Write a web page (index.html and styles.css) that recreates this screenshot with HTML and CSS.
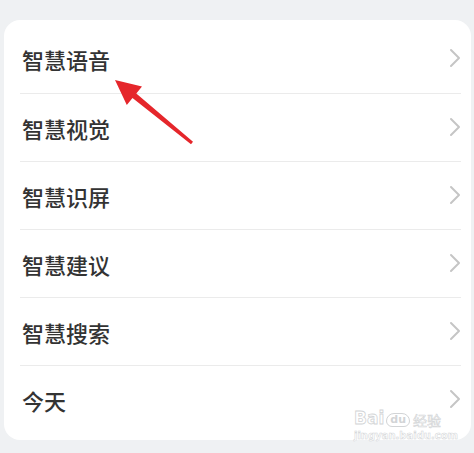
FILE: index.html
```html
<!DOCTYPE html>
<html lang="zh">
<head>
<meta charset="utf-8">
<link rel="stylesheet" href="styles.css">
</head>
<body>
<div class="card">
  <div class="row"><span class="label">智慧语音</span><svg class="chev" viewBox="0 0 12 20"><path d="M2 2 L10 10 L2 18" /></svg></div>
  <div class="row"><span class="label">智慧视觉</span><svg class="chev" viewBox="0 0 12 20"><path d="M2 2 L10 10 L2 18" /></svg></div>
  <div class="row"><span class="label">智慧识屏</span><svg class="chev" viewBox="0 0 12 20"><path d="M2 2 L10 10 L2 18" /></svg></div>
  <div class="row"><span class="label">智慧建议</span><svg class="chev" viewBox="0 0 12 20"><path d="M2 2 L10 10 L2 18" /></svg></div>
  <div class="row"><span class="label">智慧搜索</span><svg class="chev" viewBox="0 0 12 20"><path d="M2 2 L10 10 L2 18" /></svg></div>
  <div class="row"><span class="label">今天</span><svg class="chev" viewBox="0 0 12 20"><path d="M2 2 L10 10 L2 18" /></svg></div>
</div>
<svg class="arrow" width="474" height="453" viewBox="0 0 474 453">
  <polygon points="115,80 142,86.5 136.3,93.5 193,141.8 191,144.2 132.5,98.1 126.8,105.1" />
</svg>
<div class="watermark">
  <div class="wm-top"><span class="wm-bai">Bai</span><span class="wm-du">du</span><span class="wm-jy">经验</span></div>
  <div class="wm-url">jingyan.baidu.com</div>
</div>
</body>
</html>
```

FILE: styles.css
```css
html, body {
  margin: 0;
  padding: 0;
}
body {
  background: #eff1f3;
  width: 474px;
  height: 453px;
  overflow: hidden;
  font-family: "Noto Sans CJK SC", "Noto Sans", sans-serif;
}
.card {
  margin: 20px 3px 0 4px;
  background: #ffffff;
  border-radius: 16px;
  padding: 5px 0 7px;
}
.row {
  position: relative;
  height: 68px;
  display: flex;
  align-items: center;
  justify-content: space-between;
  margin: 0 10px 0 16px;
  padding: 0 0 0 2px;
  box-sizing: border-box;
}
.row + .row {
  border-top: 1px solid #ebebeb;
}
.label {
  font-size: 22px;
  font-weight: 500;
  color: #333333;
  line-height: 1;
  letter-spacing: 0;
}
.chev {
  width: 12px;
  height: 20px;
  margin-top: -2px;
}
.chev path {
  fill: none;
  stroke: #c5c5c5;
  stroke-width: 2;
  stroke-linecap: round;
  stroke-linejoin: round;
}
.arrow {
  position: absolute;
  left: 0;
  top: 0;
}
.arrow polygon {
  fill: #e5262b;
}
.watermark {
  position: absolute;
  left: 354px;
  top: 400px;
  width: 96px;
  color: #ffffff;
  font-family: "DejaVu Sans", sans-serif;
  text-align: center;
}
.wm-top {
  display: flex;
  align-items: flex-end;
  height: 27px;
}
.wm-bai {
  font-size: 17px;
  font-weight: bold;
  -webkit-text-stroke: 0.8px #d2d4d6;
  line-height: 1;
}
.wm-du {
  font-size: 11px;
  font-weight: bold;
  margin-left: 2px;
  padding: 0 3px 1px;
  border: 1px solid #d2d4d6;
  border-radius: 8px 8px 6px 6px;
  color: #d2d4d6;
  line-height: 1;
}
.wm-jy {
  font-family: "Noto Sans CJK SC", sans-serif;
  font-size: 14px;
  margin-left: 3px;
  -webkit-text-stroke: 0.6px #d2d4d6;
  line-height: 1;
}
.wm-url {
  font-size: 10px;
  font-weight: bold;
  color: #ffffff;
  -webkit-text-stroke: 0.5px #d2d4d6;
  margin-top: 3px;
  text-align: left;
}
```
